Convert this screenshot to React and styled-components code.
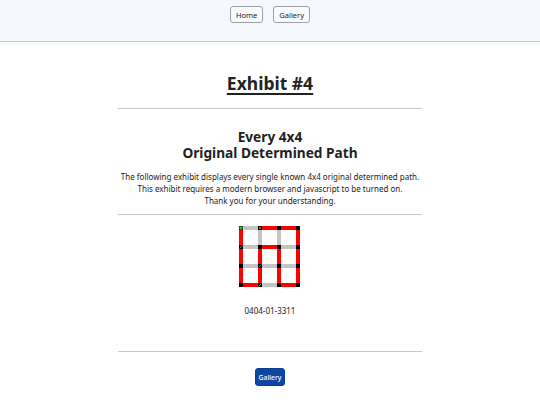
import React from "react";
import styled, { createGlobalStyle } from "styled-components";

const Global = createGlobalStyle`
  html, body { margin: 0; padding: 0; background: #ffffff; }
  body { font-family: "Noto Sans", "Open Sans", sans-serif; color: #222; }
`;

const Header = styled.header`
  height: 42px;
  background: #f5f8ff;
  border-bottom: 1px solid #c8c8d0;
  display: flex;
  justify-content: center;
  align-items: flex-start;
  gap: 10px;
  padding-top: 6px;
  box-sizing: border-box;
`;

const NavButton = styled.button`
  height: 17px;
  padding: 0 5px;
  font-family: "Noto Sans", sans-serif;
  font-size: 7.5px;
  color: #222;
  background: #fafbff;
  border: 1px solid #9aa0a8;
  border-radius: 3px;
  cursor: pointer;
`;

const Main = styled.main`
  width: 304px;
  margin: 0 auto;
  display: flex;
  flex-direction: column;
  align-items: center;
  text-align: center;
`;

const Title = styled.h1`
  margin: 28px 0 0;
  font-size: 17.5px;
  line-height: 26px;
  font-weight: 700;
  text-decoration: underline;
  text-underline-offset: 3px;
  text-decoration-thickness: 1.5px;
`;

const Rule = styled.hr`
  width: 100%;
  margin: ${(p) => p.$top}px 0 0;
  border: 0;
  border-top: 1px solid #c8c8c8;
`;

const Subtitle = styled.h2`
  margin: 20px 0 0;
  font-size: 13.7px;
  line-height: 16px;
  font-weight: 700;
`;

const Text = styled.p`
  margin: 10px 0 0;
  font-size: 8px;
  line-height: 12px;
`;

const Code = styled.div`
  margin-top: 16px;
  font-size: 8px;
  line-height: 12px;
`;

const PrimaryButton = styled.button`
  margin-top: 16px;
  height: 18px;
  padding: 0 3px;
  font-family: "Noto Sans", sans-serif;
  font-size: 6.8px;
  font-weight: 500;
  color: #fff;
  background: #0d47a1;
  border: 1px solid #0a3d8f;
  border-radius: 3px;
  cursor: pointer;
`;

const GridWrap = styled.div`
  margin-top: 11px;
  width: 63px;
  height: 63px;
`;

const N = 4;
const STEP = 19;
const OFF = 2;

const path = [
  [0, 0], [0, 1], [0, 2], [0, 3], [1, 3], [1, 2], [1, 1], [2, 1],
  [2, 2], [2, 3], [3, 3], [3, 2], [3, 1], [3, 0], [2, 0], [1, 0],
];

function PathGrid() {
  const red = new Set();
  for (let i = 0; i < path.length - 1; i++) {
    const a = path[i].join(",");
    const b = path[i + 1].join(",");
    red.add(a + "|" + b);
    red.add(b + "|" + a);
  }
  const edges = [];
  for (let y = 0; y < N; y++) {
    for (let x = 0; x < N; x++) {
      if (x < N - 1) edges.push([[x, y], [x + 1, y]]);
      if (y < N - 1) edges.push([[x, y], [x, y + 1]]);
    }
  }
  const pos = (v) => OFF + v * STEP;
  const isRed = (e) => red.has(e[0].join(",") + "|" + e[1].join(","));
  const gray = edges.filter((e) => !isRed(e));
  const reds = edges.filter(isRed);
  const marks = [[0, 1], [1, 2], [1, 3]];
  return (
    <svg width="63" height="63" viewBox="0 0 63 63">
      <rect x="0" y="0" width="63" height="63" fill="#fff" />
      {gray.map((e, i) => (
        <line key={"g" + i} x1={pos(e[0][0])} y1={pos(e[0][1])} x2={pos(e[1][0])} y2={pos(e[1][1])} stroke="#c4c4c4" strokeWidth="4" />
      ))}
      {reds.map((e, i) => (
        <line key={"r" + i} x1={pos(e[0][0])} y1={pos(e[0][1])} x2={pos(e[1][0])} y2={pos(e[1][1])} stroke="#ff0000" strokeWidth="4" />
      ))}
      {Array.from({ length: N * N }).map((_, i) => {
        const x = i % N;
        const y = Math.floor(i / N);
        return <rect key={"n" + i} x={pos(x) - 2} y={pos(y) - 2} width="4" height="4" fill="#000" />;
      })}
      <rect x={pos(0) - 2} y={pos(0) - 2} width="4" height="4" fill="#111" />
      <rect x={pos(0) - 1.5} y={pos(0) - 1.5} width="3" height="3" fill="#22c422" />
      <rect x={pos(1) - 1} y={pos(0) - 1} width="2" height="2" fill="#22a822" />
      {marks.map(([x, y], i) => (
        <line key={"m" + i} x1={pos(x) - 1.3} y1={pos(y) + 1.3} x2={pos(x) + 1.3} y2={pos(y) - 1.3} stroke="#2fb82f" strokeWidth="1" />
      ))}
    </svg>
  );
}

export default function App() {
  return (
    <>
      <Global />
      <Header>
        <NavButton>Home</NavButton>
        <NavButton>Gallery</NavButton>
      </Header>
      <Main>
        <Title>Exhibit #4</Title>
        <Rule $top={12} />
        <Subtitle>
          Every 4x4
          <br />
          Original Determined Path
        </Subtitle>
        <Text>
          The following exhibit displays every single known 4x4 original determined path.
          <br />
          This exhibit requires a modern browser and javascript to be turned on.
          <br />
          Thank you for your understanding.
        </Text>
        <Rule $top={7} />
        <GridWrap>
          <PathGrid />
        </GridWrap>
        <Code>0404-01-3311</Code>
        <Rule $top={34} />
        <PrimaryButton>Gallery</PrimaryButton>
      </Main>
    </>
  );
}
